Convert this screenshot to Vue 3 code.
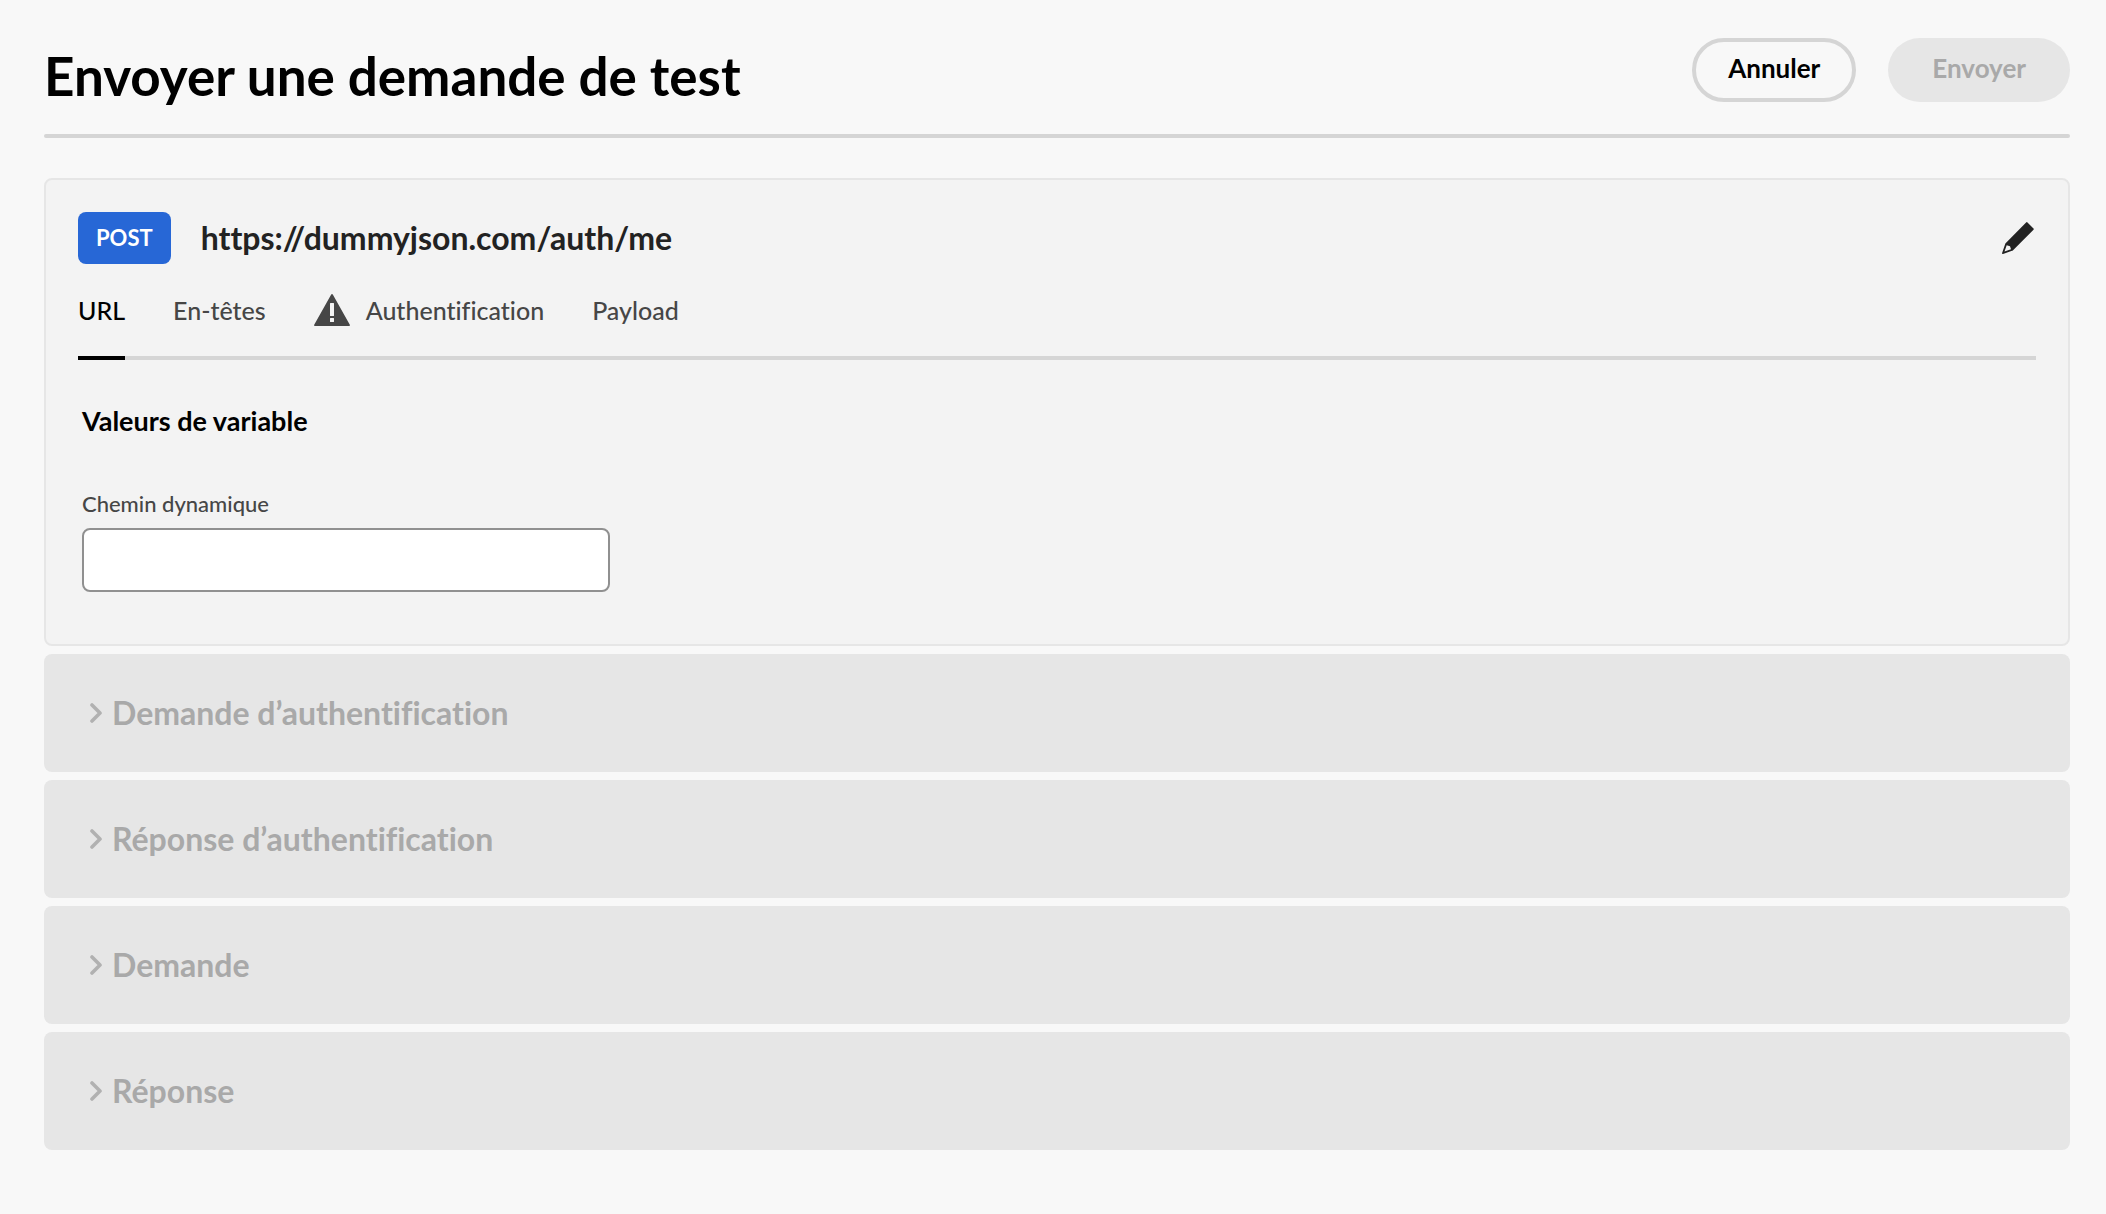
<script setup>
import { ref } from 'vue'

const tabs = [
  { id: 'url', label: 'URL' },
  { id: 'headers', label: 'En-têtes' },
  { id: 'auth', label: 'Authentification', warning: true },
  { id: 'payload', label: 'Payload' },
]
const activeTab = ref('url')
const dynamicPath = ref('')
const sections = [
  'Demande d’authentification',
  'Réponse d’authentification',
  'Demande',
  'Réponse',
]
</script>

<template>
  <main class="page">
    <header class="page-header">
      <h1>Envoyer une demande de test</h1>
      <div class="actions">
        <button type="button" class="btn btn-outline">Annuler</button>
        <button type="button" class="btn btn-primary" disabled>Envoyer</button>
      </div>
    </header>
    <hr class="divider" />

    <div class="stack">
      <section class="card">
        <div class="endpoint">
          <span class="method">POST</span>
          <h2 class="endpoint-url">https://dummyjson.com/auth/me</h2>
          <button type="button" class="edit" aria-label="Modifier">
            <svg viewBox="0 0 36 36" width="36" height="36" aria-hidden="true">
              <path
                fill="#222"
                fill-rule="evenodd"
                d="M26.1 2.4a1 1 0 0 1 1.4 0l6 6a1 1 0 0 1 0 1.4L12.8 30.4a1.5 1.5 0 0 1-.7.4L3 33.9a.7.7 0 0 1-.9-.9l3.1-9.1a1.5 1.5 0 0 1 .4-.7zM6.7 25.2 4.5 31.5 11 29.300 10 26.200z"
              />
            </svg>
          </button>
        </div>

        <div class="tabs" role="tablist">
          <button
            v-for="tab in tabs"
            :key="tab.id"
            type="button"
            role="tab"
            class="tab"
            :class="{ active: tab.id === activeTab }"
            :aria-selected="tab.id === activeTab"
            @click="activeTab = tab.id"
          >
            <svg v-if="tab.warning" viewBox="0 0 36 32" width="36" height="32" aria-hidden="true">
              <path
                fill="#464646"
                fill-rule="evenodd"
                d="M17.2.5a.9.9 0 0 1 1.6 0l17 30.2a.9.9 0 0 1-.8 1.3H1a.9.9 0 0 1-.8-1.3zM16.5 9a.5.5 0 0 0-.5.5v12a.5.5 0 0 0 .5.5h3a.5.5 0 0 0 .5-.5v-12a.5.5 0 0 0-.5-.5zM16.5 24a.5.5 0 0 0-.5.5v3a.5.5 0 0 0 .5.5h3a.5.5 0 0 0 .5-.5v-3a.5.5 0 0 0-.5-.5z"
              />
            </svg>
            {{ tab.label }}
          </button>
        </div>

        <div class="variables" role="tabpanel">
          <h3>Valeurs de variable</h3>
          <label for="dynamic-path">Chemin dynamique</label>
          <input id="dynamic-path" v-model="dynamicPath" type="text" />
        </div>
      </section>

      <h2 v-for="title in sections" :key="title" class="section">
        <button type="button" class="section-toggle" aria-expanded="false" disabled>
          <svg viewBox="0 0 12 20" width="12" height="20" aria-hidden="true">
            <path
              d="M2 2l8 8-8 8"
              fill="none"
              stroke="#b1b1b1"
              stroke-width="3.6"
              stroke-linecap="round"
              stroke-linejoin="round"
            />
          </svg>
          {{ title }}
        </button>
      </h2>
    </div>
  </main>
</template>

<style>
body {
  background: #f8f8f8;
}
</style>

<style scoped>
.page {
  padding: 38px 36px 64px 44px;
  font-family: Lato, "Noto Sans", sans-serif;
  font-variant-ligatures: none;
  color: #000;
}

.page *,
.page {
  box-sizing: border-box;
}

h1,
h2,
h3 {
  margin: 0;
}

button {
  font-family: inherit;
  font-variant-ligatures: inherit;
  background: none;
  border: 0;
  padding: 0;
}

svg {
  display: block;
  flex: none;
}

.page-header {
  display: flex;
  justify-content: space-between;
  align-items: flex-start;
}

h1 {
  font-size: 53px;
  font-weight: 700;
  line-height: 76px;
}

.actions {
  display: flex;
  gap: 32px;
}

.btn {
  height: 64px;
  border-radius: 32px;
  font-size: 26px;
  font-weight: 700;
}

.btn-outline {
  padding: 0 32px 4px;
  border: 4px solid #d5d5d5;
  color: #000;
}

.btn-primary {
  padding: 0 44px 4px;
  background: #e6e6e6;
  color: #a9a9a9;
}

.divider {
  height: 4px;
  margin: 20px 0 40px;
  border: 0;
  border-radius: 2px;
  background: #d5d5d5;
}

.stack {
  display: flex;
  flex-direction: column;
  gap: 8px;
}

.card {
  padding: 32px 32px 52px;
  border: 2px solid #e6e6e6;
  border-radius: 8px;
  background: #f3f3f3;
}

.endpoint {
  display: flex;
  align-items: center;
}

.method {
  padding: 0 18px;
  border-radius: 8px;
  background: #2767d6;
  color: #fff;
  font-size: 22px;
  font-weight: 700;
  line-height: 52px;
}

.endpoint-url {
  margin-left: 30px;
  color: #222;
  font-size: 32px;
  font-weight: 700;
  line-height: 52px;
}

.edit {
  margin-left: auto;
}

.tabs {
  display: flex;
  gap: 48px;
  border-bottom: 4px solid #d5d5d5;
}

.tab {
  display: flex;
  align-items: center;
  gap: 16px;
  margin-bottom: -4px;
  border-bottom: 4px solid transparent;
  color: #464646;
  font-size: 25px;
  font-weight: 500;
  line-height: 92px;
}

.tab.active {
  border-bottom-color: #000;
  color: #000;
}

.variables {
  display: flex;
  flex-direction: column;
  align-items: flex-start;
  padding: 40px 4px 0;
}

h3 {
  margin-bottom: 46px;
  font-size: 27px;
  font-weight: 700;
  line-height: 42px;
}

label {
  margin-bottom: 8px;
  color: #464646;
  font-size: 22px;
  font-weight: 500;
  line-height: 32px;
}

input {
  width: 528px;
  max-width: 100%;
  height: 64px;
  padding: 0 16px;
  border: 2px solid #909090;
  border-radius: 8px;
  background: #fff;
  font: inherit;
  font-size: 25px;
}

.section {
  border-radius: 8px;
  background: #e6e6e6;
}

.section-toggle {
  display: flex;
  align-items: center;
  gap: 10px;
  width: 100%;
  padding: 0 46px;
  color: #a9a9a9;
  font-size: 32px;
  font-weight: 700;
  line-height: 118px;
}
</style>
